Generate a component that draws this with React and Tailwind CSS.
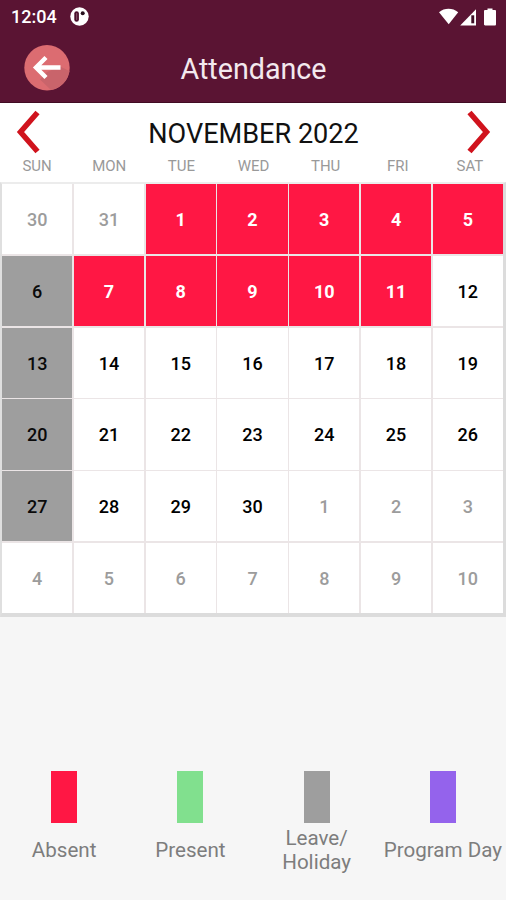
const WEEKDAYS = ['SUN', 'MON', 'TUE', 'WED', 'THU', 'FRI', 'SAT'];

// 42 cells starting at October 30
const DAYS = Array.from({ length: 42 }, (_, i) => {
  if (i < 2) return { n: 30 + i, kind: 'outside' };
  if (i > 31) return { n: i - 31, kind: 'outside' };
  const n = i - 1;
  if (i % 7 === 0) return { n, kind: 'holiday' };
  return { n, kind: n <= 11 ? 'absent' : 'plain' };
});

const STYLES = {
  outside: 'bg-white font-medium text-[#9c9c9c]',
  holiday: 'bg-[#9e9e9e] font-medium text-[#0a0a0a]',
  absent: 'bg-[#ff1744] font-bold text-white',
  plain: 'bg-white font-medium text-black',
};

const LEGEND = [
  { label: ['Absent'], color: 'bg-[#ff1744]' },
  { label: ['Present'], color: 'bg-[#81e08e]' },
  { label: ['Leave/', 'Holiday'], color: 'bg-[#9e9e9e]' },
  { label: ['Program Day'], color: 'bg-[#9463ec]' },
];

function StatusBar() {
  return (
    <div className="flex h-[33px] items-center pl-[11px] pr-[8px] text-white">
      <span className="w-[46px] whitespace-nowrap pt-px text-[18px] font-medium leading-none">12:04</span>
      <svg className="ml-[13px]" width="19" height="19" viewBox="0 0 19 19">
        <circle cx="9.5" cy="9.5" r="9.2" fill="#fff" />
        <rect x="4.300" y="4.200" width="4.600" height="10.600" rx="2.300" fill="#4a0f2b" />
        <rect x="6.200" y="6" width="1" height="7" rx="0.500" fill="#8a5a70" />
        <circle cx="12.700" cy="6.200" r="2" fill="#26101c" />
      </svg>
      <svg className="ml-auto" width="60" height="20" viewBox="0 0 60 20">
        <path d="M1 5.2C6.500 0.700 14.500 0.700 20.200 5.200L10.700 17.300Z" fill="#fff" />
        <path d="M38 2.200V18.500H22.200Z" fill="#fff" />
        <path d="M33.300 8.300h2.900v8h-2.900z" fill="#3d0f26" />
        <path d="M49.500 1.500h5v1.400h2.300c.8 0 1.200.5 1.200 1.200v13.200c0 .8-.5 1.200-1.200 1.200h-9.600c-.8 0-1.200-.5-1.200-1.200V4.100c0-.8.500-1.200 1.200-1.200h2.300z" fill="#fff" />
      </svg>
    </div>
  );
}

function Header() {
  return (
    <header className="h-[103px] shrink-0 border-b border-[#410b23] bg-[#5a1433]">
      <StatusBar />
      <div className="grid h-[70px] grid-cols-[70px_1fr_69px] items-center">
        <button className="ml-[24px] size-[46px]" aria-label="Back">
          <svg width="46" height="46" viewBox="0 0 46 46">
            <circle cx="23" cy="22.700" r="22.700" fill="#dc6c71" />
            <path d="M36 21.500L45.500 26A23 23 0 0 1 27 45L16 34.500L23 27Z" fill="#c9646b" />
            <path d="M22 12.500L12 22.500L22 32.500M12.500 22.500H36.500" fill="none" stroke="#fff" strokeWidth="4.400" />
          </svg>
        </button>
        <h1 className="pt-[3px] text-center text-[28.7px] leading-none text-[#f3e9ee]">Attendance</h1>
      </div>
    </header>
  );
}

function Chevron({ next }) {
  return (
    <svg width="24" height="44" viewBox="0 0 24 44" className={next ? '-scale-x-100' : ''}>
      <path d="M21.500 2.500L4.500 22L21.500 41.500" fill="none" stroke="#d0131d" strokeWidth="5.500" />
    </svg>
  );
}

function Calendar() {
  return (
    <section className="shrink-0 bg-white">
      <div className="flex h-[58px] items-center justify-between pl-[16px] pr-[15px]">
        <Chevron />
        <h2 className="pt-[5px] text-[27.1px] leading-none text-[#111]">NOVEMBER 2022</h2>
        <Chevron next />
      </div>
      <div className="grid h-[21px] grid-cols-7 pl-[1px] text-center text-[15px] leading-[11px] text-[#999]">
        {WEEKDAYS.map((d) => (
          <span key={d}>{d}</span>
        ))}
      </div>
      <div className="grid h-[435px] grid-cols-7 grid-rows-6 gap-[1.5px] border-b-4 border-l-2 border-r-3 border-t-2 border-b-[#dcdcdc] border-l-[#dfdfdf] border-r-[#dcdcdc] border-t-[#ececec] bg-[#ebe5e6]">
        {DAYS.map((d, i) => (
          <div key={i} className={`flex items-center justify-center pt-[2px] text-[18px] leading-none ${STYLES[d.kind]}`}>
            {d.n}
          </div>
        ))}
      </div>
    </section>
  );
}

function Legend() {
  return (
    <div className="mt-[154px] grid grid-cols-4 pl-[1px]">
      {LEGEND.map((item) => (
        <div key={item.label[0]} className="flex flex-col items-center">
          <span className={`h-[52px] w-[26px] ${item.color}`} />
          <div className="flex h-[54px] flex-col justify-center whitespace-nowrap text-center text-[20.6px] leading-[24px] text-[#7d7d7d]">
            {item.label.map((line) => (
              <span key={line}>{line}</span>
            ))}
          </div>
        </div>
      ))}
    </div>
  );
}

export default function App() {
  return (
    <div className="flex h-[900px] w-[506px] flex-col overflow-hidden bg-[#f6f6f6] font-['Roboto',sans-serif]">
      <Header />
      <Calendar />
      <Legend />
    </div>
  );
}
